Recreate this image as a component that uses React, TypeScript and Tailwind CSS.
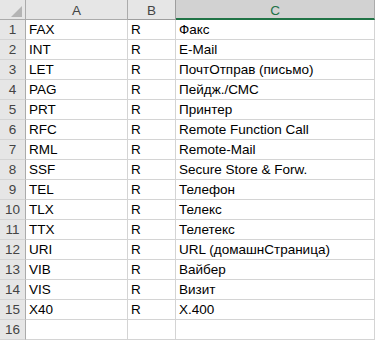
const rows: [string, string, string][] = [
  ["FAX", "R", "Факс"],
  ["INT", "R", "E-Mail"],
  ["LET", "R", "ПочтОтправ (письмо)"],
  ["PAG", "R", "Пейдж./СМС"],
  ["PRT", "R", "Принтер"],
  ["RFC", "R", "Remote Function Call"],
  ["RML", "R", "Remote-Mail"],
  ["SSF", "R", "Secure Store & Forw."],
  ["TEL", "R", "Телефон"],
  ["TLX", "R", "Телекс"],
  ["TTX", "R", "Телетекс"],
  ["URI", "R", "URL (домашнСтраница)"],
  ["VIB", "R", "Вайбер"],
  ["VIS", "R", "Визит"],
  ["X40", "R", "X.400"],
  ["", "", ""],
];

export default function App() {
  return (
    <div
      className="w-[376px] h-[340px] bg-white overflow-hidden text-[13.5px] leading-[17px] text-black"
      style={{ fontFamily: '"Liberation Sans", Arial, sans-serif' }}
    >
      <div className="grid grid-cols-[26px_102px_48px_199px]">
        {/* Header row */}
        <div className="h-5 bg-[#e6e6e6] border-r border-b border-[#ababab] relative">
          <svg width="26" height="20" className="absolute left-0 top-0">
            <polygon points="22,6 22,17 11,17" fill="#b4b4b4" />
          </svg>
        </div>
        <div className="h-5 bg-[#e6e6e6] border-r border-b border-[#ababab] text-center text-[#444] pt-[2px]">
          A
        </div>
        <div className="h-5 bg-[#e6e6e6] border-r border-b border-[#9e9e9e] text-center text-[#444] pt-[2px]">
          B
        </div>
        <div className="h-5 bg-[#d2d2d2] border-r border-[#ababab] border-b-2 border-b-[#217346] text-center text-[#217346] pt-[2px]">
          C
        </div>

        {/* Data rows */}
        {rows.map((r, i) => (
          <div key={i} className="contents">
            <div className="h-5 bg-[#e6e6e6] border-r border-r-[#ababab] border-b border-b-[#d4d4d4] text-center text-[#444] pt-[1px]">
              {i + 1}
            </div>
            <div className="h-5 border-r border-b border-[#d4d4d4] pl-[3px] pt-[1px] whitespace-nowrap">
              {r[0]}
            </div>
            <div className="h-5 border-r border-b border-[#d4d4d4] pl-[3px] pt-[1px] whitespace-nowrap">
              {r[1]}
            </div>
            <div className="h-5 border-r border-b border-[#d4d4d4] pl-[3px] pt-[1px] whitespace-nowrap">
              {r[2]}
            </div>
          </div>
        ))}
      </div>
    </div>
  );
}
